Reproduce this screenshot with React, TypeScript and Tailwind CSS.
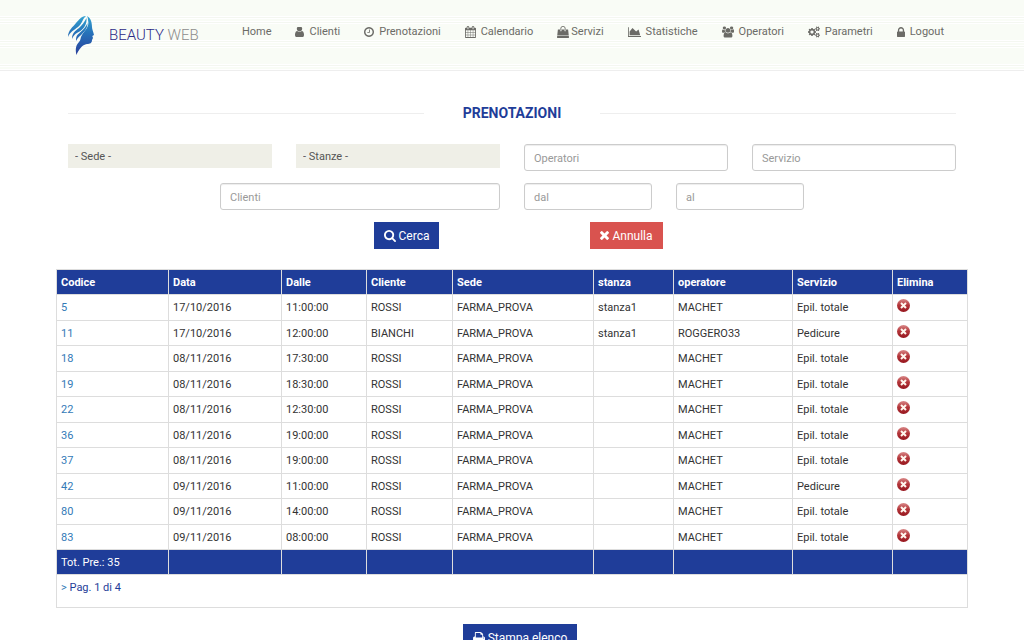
import React, { useState } from 'react';

const icons = {
  user: {
    box: '0 128 1280 1408',
    size: 'w-[9px] h-[10px]',
    d: 'M1280 1271q0 109-62.5 187t-150.5 78h-854q-88 0-150.5-78t-62.5-187q0-85 8.5-160.5t31.5-152 58.5-131 94-89 134.5-34.5q131 128 313 128t313-128q76 0 134.5 34.5t94 89 58.5 131 31.5 152 8.5 160.5zm-256-887q0 159-112.5 271.5t-271.5 112.5-271.5-112.5-112.5-271.5 112.5-271.5 271.5-112.5 271.5 112.5 112.5 271.5z',
  },
  clock: {
    box: '128 128 1536 1536',
    size: 'w-[10px] h-[10px]',
    d: 'M1024 544v448q0 14-9 23t-23 9h-320q-14 0-23-9t-9-23v-64q0-14 9-23t23-9h224v-352q0-14 9-23t23-9h64q14 0 23 9t9 23zm416 352q0-148-73-273t-198-198-273-73-273 73-198 198-73 273 73 273 198 198 273 73 273-73 198-198 73-273zm224 0q0 209-103 385.5t-279.5 279.5-385.5 103-385.5-103-279.5-279.5-103-385.5 103-385.5 279.5-279.5 385.5-103 385.5 103 279.5 279.5 103 385.5z',
  },
  calendar: {
    box: '64 0 1664 1792',
    size: 'w-[11px] h-[12px]',
    d: 'M192 1664h288v-288h-288v288zm352 0h320v-288h-320v288zm-352-352h288v-320h-288v320zm352 0h320v-320h-320v320zm-352-384h288v-288h-288v288zm736 736h320v-288h-320v288zm-384-736h320v-288h-320v288zm768 736h288v-288h-288v288zm-384-352h320v-320h-320v320zm-352-864v-288q0-13-9.5-22.5t-22.5-9.5h-64q-13 0-22.5 9.5t-9.5 22.5v288q0 13 9.5 22.5t22.5 9.5h64q13 0 22.5-9.5t9.5-22.5zm736 864h288v-320h-288v320zm-384-384h320v-288h-320v288zm384 0h288v-288h-288v288zm32-480v-288q0-13-9.5-22.5t-22.5-9.5h-64q-13 0-22.5 9.5t-9.5 22.5v288q0 13 9.5 22.5t22.5 9.5h64q13 0 22.5-9.5t9.5-22.5zm384-64v1280q0 52-38 90t-90 38h-1408q-52 0-90-38t-38-90v-1280q0-52 38-90t90-38h128v-96q0-66 47-113t113-47h64q66 0 113 47t47 113v96h384v-96q0-66 47-113t113-47h64q66 0 113 47t47 113v96h128q52 0 90 38t38 90z',
  },
  bag: {
    box: '0 0 1792 1792',
    size: 'w-[12px] h-[12px]',
    d: 'M1757 1408l35 313q3 28-16 50-19 21-48 21h-1664q-29 0-48-21-19-22-16-50l35-313h1722zm-93-839l86 775h-1708l86-775q3-24 21-40.5t43-16.5h256v128q0 53 37.5 90.5t90.5 37.5 90.5-37.5 37.5-90.5v-128h384v128q0 53 37.5 90.5t90.5 37.5 90.5-37.5 37.5-90.5v-128h256q25 0 43 16.5t21 40.5zm-384-185v256q0 26-19 45t-45 19-45-19-19-45v-256q0-106-75-181t-181-75-181 75-75 181v256q0 26-19 45t-45 19-45-19-19-45v-256q0-159 112.5-271.5t271.5-112.5 271.5 112.5 112.5 271.5z',
  },
  chart: {
    box: '0 128 2048 1536',
    size: 'w-[13px] h-[10px]',
    d: 'M2048 1536v128h-2048v-1536h128v1408h1920zm-384-1024l256 896h-1664v-576l448-576 576 576z',
  },
  users: {
    box: '0 0 1920 1792',
    size: 'w-[12px] h-[12px]',
    d: 'M593 896q-162 5-265 128h-134q-82 0-138-40.5t-56-118.5q0-353 124-353 6 0 43.5 21t97.5 42.5 119 21.5q67 0 133-23-5 37-5 66 0 159 93 293zm1071 637q0 120-73 189.5t-194 69.5h-874q-121 0-194-69.5t-73-189.5q0-53 3.5-103.5t14-109 26.5-108.5 43-97.5 62-81 85.5-53.5 111.5-20q10 0 43 21.5t73 48 107 48 135 21.5 135-21.5 107-48 73-48 43-21.5q61 0 111.5 20t85.5 53.5 62 81 43 97.5 26.5 108.5 14 109 3.5 103.5zm-1024-1277q0 106-75 181t-181 75-181-75-75-181 75-181 181-75 181 75 75 181zm704 384q0 159-112.5 271.5t-271.5 112.5-271.5-112.5-112.5-271.5 112.5-271.5 271.5-112.5 271.5 112.5 112.5 271.5zm576 225q0 78-56 118.5t-138 40.5h-134q-103-123-265-128 93-134 93-293 0-29-5-66 66 23 133 23 59 0 119-21.5t97.5-42.5 43.5-21q124 0 124 353zm-128-609q0 106-75 181t-181 75-181-75-75-181 75-181 181-75 181 75 75 181z',
  },
  cogs: {
    box: '0 0 1920 1792',
    size: 'w-[12px] h-[12px]',
    d: 'M896 896q0-106-75-181t-181-75-181 75-75 181 75 181 181 75 181-75 75-181zm768 512q0-52-38-90t-90-38-90 38-38 90q0 53 37.5 90.5t90.5 37.5 90.5-37.5 37.5-90.5zm0-1024q0-52-38-90t-90-38-90 38-38 90q0 53 37.5 90.5t90.5 37.5 90.5-37.5 37.5-90.5zm-384 421v185q0 10-7 19.5t-16 10.5l-155 24q-11 35-32 76 34 48 90 115 7 11 7 20 0 12-7 19-23 30-82.5 89.5t-78.5 59.5q-11 0-21-7l-115-90q-37 19-77 31-11 108-23 155-7 24-30 24h-186q-11 0-20-7.5t-10-17.5l-23-153q-34-10-75-31l-118 89q-7 7-20 7-11 0-21-8-144-133-144-160 0-9 7-19 10-14 41-53t47-61q-23-44-35-82l-152-24q-10-1-17-9.5t-7-19.5v-185q0-10 7-19.5t16-10.5l155-24q11-35 32-76-34-48-90-115-7-11-7-20 0-12 7-20 22-30 82-89t79-59q11 0 21 7l115 90q34-18 77-32 11-108 23-154 7-24 30-24h186q11 0 20 7.5t10 17.5l23 153q34 10 75 31l118-89q8-7 20-7 11 0 21 8 144 133 144 160 0 8-7 19-12 16-42 54t-45 60q23 48 34 82l152 23q10 2 17 10.5t7 19.5zm640 533v140q0 16-149 31-12 27-30 52 51 113 51 138 0 4-4 7-122 71-124 71-8 0-46-47t-52-68q-20 2-30 2t-30-2q-14 21-52 68t-46 47q-2 0-124-71-4-3-4-7 0-25 51-138-18-25-30-52-149-15-149-31v-140q0-16 149-31 13-29 30-52-51-113-51-138 0-4 4-7 4-2 35-20t59-34 30-16q8 0 46 46.5t52 67.5q20-2 30-2t30 2q51-71 92-112l6-2q4 0 124 70 4 3 4 7 0 25-51 138 17 23 30 52 149 15 149 31zm0-1024v140q0 16-149 31-12 27-30 52 51 113 51 138 0 4-4 7-122 71-124 71-8 0-46-47t-52-68q-20 2-30 2t-30-2q-14 21-52 68t-46 47q-2 0-124-71-4-3-4-7 0-25 51-138-18-25-30-52-149-15-149-31v-140q0-16 149-31 13-29 30-52-51-113-51-138 0-4 4-7 4-2 35-20t59-34 30-16q8 0 46 46.5t52 67.5q20-2 30-2t30 2q51-71 92-112l6-2q4 0 124 70 4 3 4 7 0 25-51 138 17 23 30 52 149 15 149 31z',
  },
  lock: {
    box: '320 128 1152 1408',
    size: 'w-[8px] h-[10px]',
    d: 'M640 768h512v-192q0-106-75-181t-181-75-181 75-75 181v192zm832 96v576q0 40-28 68t-68 28h-960q-40 0-68-28t-28-68v-576q0-40 28-68t68-28h32v-192q0-184 132-316t316-132 316 132 132 316v192h32q40 0 68 28t28 68z',
  },
  search: {
    box: '64 128 1664 1664',
    size: 'w-[12px] h-[12px]',
    d: 'M1216 832q0-185-131.5-316.5t-316.5-131.5-316.5 131.5-131.5 316.5 131.5 316.5 316.5 131.5 316.5-131.5 131.5-316.5zm512 832q0 52-38 90t-90 38q-54 0-90-38l-343-342q-179 124-399 124-143 0-273.5-55.5t-225-150-150-225-55.5-273.5 55.5-273.5 150-225 225-150 273.5-55.5 273.5 55.5 225 150 150 225 55.5 273.5q0 220-124 399l343 343q37 37 37 90z',
  },
  times: {
    box: '302 366 1188 1188',
    size: 'w-[9px] h-[9px]',
    d: 'M1490 1322q0 40-28 68l-136 136q-28 28-68 28t-68-28l-294-294-294 294q-28 28-68 28t-68-28l-136-136q-28-28-28-68t28-68l294-294-294-294q-28-28-28-68t28-68l136-136q28-28 68-28t68 28l294 294 294-294q28-28 68-28t68 28l136 136q28 28 28 68t-28 68l-294 294 294 294q28 28 28 68z',
  },
  print: {
    box: '64 128 1664 1536',
    size: 'w-[12px] h-[11px]',
    d: 'M448 1536h896v-256h-896v256zm0-640h896v-384h-160q-40 0-68-28t-28-68v-160h-640v640zm1152 64q0-26-19-45t-45-19-45 19-19 45 19 45 45 19 45-19 19-45zm128 0v416q0 13-9.5 22.5t-22.5 9.5h-224v160q0 40-28 68t-68 28h-960q-40 0-68-28t-28-68v-160h-224q-13 0-22.5-9.5t-9.5-22.5v-416q0-79 56.5-135.5t135.5-56.5h64v-544q0-40 28-68t68-28h672q40 0 88 20t76 48l152 152q28 28 48 76t20 88v256h64q79 0 135.5 56.5t56.5 135.5z',
  },
};

type IconName = keyof typeof icons;

const Icon = ({ name }: { name: IconName }) => (
  <svg viewBox={icons[name].box} className={`${icons[name].size} shrink-0`} fill="currentColor" aria-hidden="true">
    <path d={icons[name].d} />
  </svg>
);

const menu: { label: string; icon?: IconName; gap: string }[] = [
  { label: 'Home', gap: '' },
  { label: 'Clienti', icon: 'user', gap: 'gap-[5px]' },
  { label: 'Prenotazioni', icon: 'clock', gap: 'gap-[5px]' },
  { label: 'Calendario', icon: 'calendar', gap: 'gap-[5px]' },
  { label: 'Servizi', icon: 'bag', gap: 'gap-[2px]' },
  { label: 'Statistiche', icon: 'chart', gap: 'gap-[5px]' },
  { label: 'Operatori', icon: 'users', gap: 'gap-[5px]' },
  { label: 'Parametri', icon: 'cogs', gap: 'gap-[5px]' },
  { label: 'Logout', icon: 'lock', gap: 'gap-[5px]' },
];

const columns = [
  { label: 'Codice', width: 'w-[112px]' },
  { label: 'Data', width: 'w-[113px]' },
  { label: 'Dalle', width: 'w-[85px]' },
  { label: 'Cliente', width: 'w-[86px]' },
  { label: 'Sede', width: 'w-[141px]' },
  { label: 'stanza', width: 'w-[80px]' },
  { label: 'operatore', width: 'w-[119px]' },
  { label: 'Servizio', width: 'w-[100px]' },
  { label: 'Elimina', width: 'w-[75px]' },
];

const bookings = [
  ['5', '17/10/2016', '11:00:00', 'ROSSI', 'FARMA_PROVA', 'stanza1', 'MACHET', 'Epil. totale'],
  ['11', '17/10/2016', '12:00:00', 'BIANCHI', 'FARMA_PROVA', 'stanza1', 'ROGGERO33', 'Pedicure'],
  ['18', '08/11/2016', '17:30:00', 'ROSSI', 'FARMA_PROVA', '', 'MACHET', 'Epil. totale'],
  ['19', '08/11/2016', '18:30:00', 'ROSSI', 'FARMA_PROVA', '', 'MACHET', 'Epil. totale'],
  ['22', '08/11/2016', '12:30:00', 'ROSSI', 'FARMA_PROVA', '', 'MACHET', 'Epil. totale'],
  ['36', '08/11/2016', '19:00:00', 'ROSSI', 'FARMA_PROVA', '', 'MACHET', 'Epil. totale'],
  ['37', '08/11/2016', '19:00:00', 'ROSSI', 'FARMA_PROVA', '', 'MACHET', 'Epil. totale'],
  ['42', '09/11/2016', '11:00:00', 'ROSSI', 'FARMA_PROVA', '', 'MACHET', 'Pedicure'],
  ['80', '09/11/2016', '14:00:00', 'ROSSI', 'FARMA_PROVA', '', 'MACHET', 'Epil. totale'],
  ['83', '09/11/2016', '08:00:00', 'ROSSI', 'FARMA_PROVA', '', 'MACHET', 'Epil. totale'],
];

const Logo = () => (
  <a href="#" className="flex items-center gap-[14px]">
    <svg viewBox="0 0 27 41" className="w-[27px] h-[41px]" aria-hidden="true">
      <defs>
        <linearGradient id="face" gradientUnits="userSpaceOnUse" x1="0" y1="0" x2="0" y2="40">
          <stop offset="0" stopColor="#35a6d2" />
          <stop offset="0.45" stopColor="#2672b9" />
          <stop offset="1" stopColor="#2a3f9c" />
        </linearGradient>
      </defs>
      <g fill="url(#face)">
        <path d="M19 1C23 3 24 8 24 12C24 14 25 16 26 20L24.300 21L25 23L24 25C24 28 22 29 19 29C14 30 11 34 8.500 40C7 34 8 30 11 27C13 25 12 23 14 20C16 16 22 12 20 5C20 3 19.500 2 19 1Z" />
        <path d="M18 1C13 1 11 5 8 8C5 12 0 15 0 22C2 17 6 15 10 12C15 8 14 4 18 1Z" />
        <path d="M18.500 3C16.500 7 14 10 11 13C7 16 4 18 4 24C6 19 9 18 13 15.500C17 12.500 19 8 18.500 3Z" />
        <path d="M19.500 8C18 12 15 15 12 17.500C9 20 8 21 8 26C10 22 12 21 14 19C17 16 19.500 13 19.500 8Z" />
      </g>
    </svg>
    <span className="text-[15px] font-light text-[#8c8c8c]">
      <span className="text-[#2b2a86]">BEAUTY</span> WEB
    </span>
  </a>
);

const field =
  'block w-full h-[27px] rounded-[3px] border border-[#cccccc] bg-white px-[9px] pt-0.5 text-[11px] text-[#555555] placeholder:text-[#999999] placeholder:opacity-100 shadow-[inset_0_1px_1px_rgba(0,0,0,0.075)] outline-none focus:border-[#66afe9]';
const select =
  'block w-full h-6 appearance-none border-0 bg-[#efefe7] px-[7px] pt-0.5 text-[11px] text-[#555555] outline-none';
const button = 'inline-flex h-[27px] items-center gap-[3px] px-[10px] text-[12px] text-white';

const DeleteIcon = () => (
  <svg viewBox="0 0 13 13" className="block w-[13px] h-[13px]" aria-hidden="true">
    <defs>
      <linearGradient id="red" x1="0" y1="0" x2="0" y2="1">
        <stop offset="0" stopColor="#d98a8a" />
        <stop offset="0.45" stopColor="#b5383c" />
        <stop offset="1" stopColor="#96151d" />
      </linearGradient>
    </defs>
    <circle cx="6.5" cy="6.5" r="6.500" fill="url(#red)" />
    <path d="M4 4l5 5M9 4l-5 5" stroke="#fff6ee" strokeWidth="2" />
  </svg>
);

const App = () => {
  const [filters, setFilters] = useState({ operatori: '', servizio: '', clienti: '', dal: '', al: '' });

  const handleChange = (e: React.ChangeEvent<HTMLInputElement>) => {
    const { name, value } = e.target;
    setFilters({ ...filters, [name]: value });
  };

  const reset = () => setFilters({ operatori: '', servizio: '', clienti: '', dal: '', al: '' });

  return (
    <div className="min-h-screen bg-white font-[Roboto,sans-serif] text-[11px] text-[#333333]">
      <header className="border-b border-[#eeeeee] bg-[#f9fcf6] bg-[repeating-linear-gradient(to_bottom,transparent_0,transparent_16px,#ffffff_16px,#ffffff_17px,#f4f7f1_17px,#f4f7f1_18px,#ffffff_18px,#ffffff_19px,transparent_19px,transparent_21px,#ffffff_21px,#ffffff_22px,#f4f7f1_22px,#f4f7f1_23px,#ffffff_23px,#ffffff_24px)]">
        <div className="mx-auto flex h-[70px] w-full max-w-[912px] items-center justify-between px-3">
          <Logo />
          <nav className="flex items-center gap-6 pr-3 pb-1.5 text-[11px] text-[#6b6b66]">
            {menu.map((m) => (
              <a key={m.label} href="#" className={`flex items-center ${m.gap}`}>
                {m.icon && <Icon name={m.icon} />}
                {m.label}
              </a>
            ))}
          </nav>
        </div>
      </header>

      <main className="mx-auto w-full max-w-[912px]">
        <div className="flex items-center px-3 pt-8">
          <hr className="flex-1 border-[#eeeeee]" />
          <h1 className="w-[176px] text-center text-[14px] leading-5 font-bold text-[#1f3d99]">PRENOTAZIONI</h1>
          <hr className="flex-1 border-[#eeeeee]" />
        </div>

        <form onSubmit={(e) => e.preventDefault()}>
          <div className="mt-[21px] grid grid-cols-12 gap-y-3">
            <div className="col-span-3 px-3">
              <select aria-label="Sede" className={select}>
                <option>- Sede -</option>
              </select>
            </div>
            <div className="col-span-3 px-3">
              <select aria-label="Stanze" className={select}>
                <option>- Stanze -</option>
              </select>
            </div>
            <div className="col-span-3 px-3">
              <input aria-label="Operatori" name="operatori" placeholder="Operatori" value={filters.operatori} onChange={handleChange} className={field} />
            </div>
            <div className="col-span-3 px-3">
              <input aria-label="Servizio" name="servizio" placeholder="Servizio" value={filters.servizio} onChange={handleChange} className={field} />
            </div>
            <div className="col-span-4 col-start-3 px-3">
              <input aria-label="Clienti" name="clienti" placeholder="Clienti" value={filters.clienti} onChange={handleChange} className={field} />
            </div>
            <div className="col-span-2 px-3">
              <input aria-label="dal" name="dal" placeholder="dal" value={filters.dal} onChange={handleChange} className={field} />
            </div>
            <div className="col-span-2 px-3">
              <input aria-label="al" name="al" placeholder="al" value={filters.al} onChange={handleChange} className={field} />
            </div>
          </div>
          <div className="mt-3 flex justify-center gap-[151px] pl-3">
            <button type="submit" className={`${button} bg-[#1f3d99]`}>
              <Icon name="search" />
              Cerca
            </button>
            <button type="button" onClick={reset} className={`${button} bg-[#d9534f]`}>
              <Icon name="times" />
              Annulla
            </button>
          </div>
        </form>

        <table className="mt-5 h-[339px] w-full table-fixed border-collapse text-left">
          <colgroup>
            {columns.map((c) => (
              <col key={c.label} className={c.width} />
            ))}
          </colgroup>
          <thead>
            <tr className="h-[25px] bg-[#1f3d99] text-white">
              {columns.map((c) => (
                <th key={c.label} className="border border-[#dddddd] px-1 pt-0.5 font-bold">
                  {c.label}
                </th>
              ))}
            </tr>
          </thead>
          <tbody>
            {bookings.map((row) => (
              <tr key={row[0]}>
                {row.map((cell, i) => (
                  <td key={i} className="border border-[#dddddd] px-1 pt-0.5">
                    {i === 0 ? (
                      <a href="#" className="text-[#337ab7]">
                        {cell}
                      </a>
                    ) : (
                      cell
                    )}
                  </td>
                ))}
                <td className="border border-[#dddddd] px-1 pt-1 align-top">
                  <button type="button" aria-label={`Elimina ${row[0]}`} className="block">
                    <DeleteIcon />
                  </button>
                </td>
              </tr>
            ))}
          </tbody>
          <tfoot>
            <tr className="h-[25px] bg-[#1f3d99] text-white">
              <td className="border border-[#dddddd] px-1 pt-0.5">Tot. Pre.: 35</td>
              {columns.slice(1).map((c) => (
                <td key={c.label} className="border border-[#dddddd]" />
              ))}
            </tr>
            <tr className="h-[33px]">
              <td colSpan={9} className="border border-[#dddddd] px-1 pt-[5px] align-top text-[#1f3d99]">
                <a href="#" className="text-[#337ab7]">
                  &gt;
                </a>{' '}
                Pag. 1 di 4
              </td>
            </tr>
          </tfoot>
        </table>

        <div className="mt-4 flex justify-center pl-4">
          <button type="button" className={`${button} bg-[#1f3d99]`}>
            <Icon name="print" />
            Stampa elenco
          </button>
        </div>
      </main>
    </div>
  );
};

export default App;
